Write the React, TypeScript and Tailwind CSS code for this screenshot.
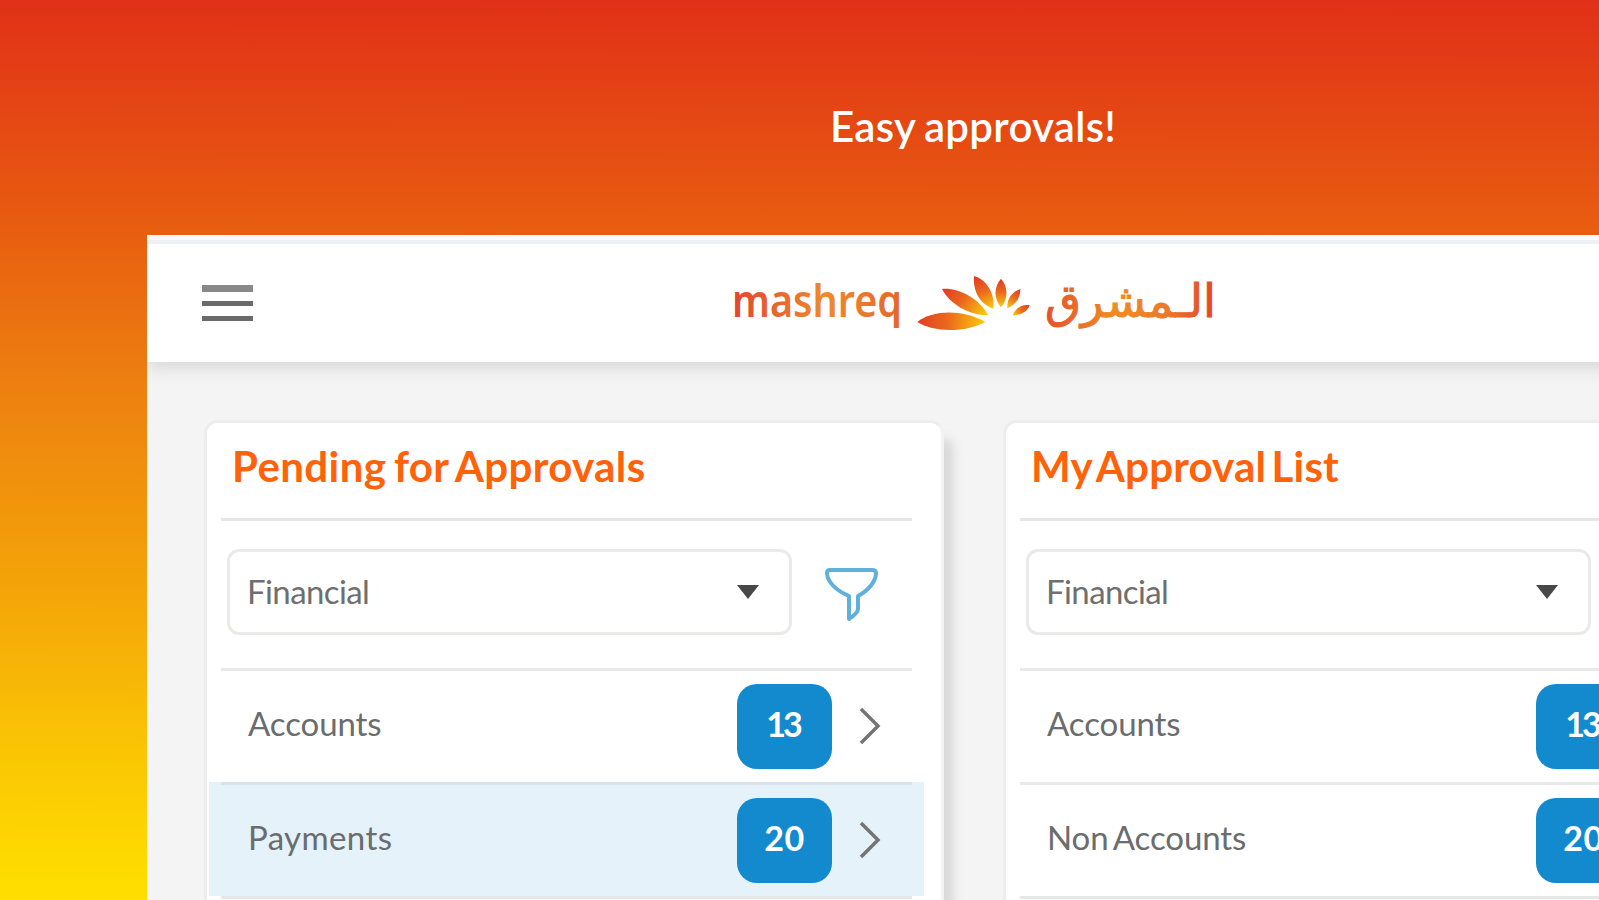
// Approvals dashboard hero: orange backdrop with a cropped app window

type Item = { label: string; count: number; active?: boolean; tracking: string; digits: string };

const pending: Item[] = [
  { label: "Accounts", count: 13, tracking: "tracking-[-0.1px]", digits: "tracking-[-3px] pr-[3px]" },
  { label: "Payments", count: 20, active: true, tracking: "tracking-[0.4px]", digits: "tracking-[0.5px]" },
];

const mine: Item[] = [
  { label: "Accounts", count: 13, tracking: "tracking-[-0.1px]", digits: "tracking-[-3px] pr-[3px]" },
  { label: "Non Accounts", count: 20, tracking: "tracking-[-0.1px] [word-spacing:-3px]", digits: "tracking-[0.5px]" },
];

// each petal runs from its outer tip to the inner, yellow end
const petals = [
  { d: "M52 186 C95 150 185 146 256 185 C200 218 100 218 52 186Z", x1: 52, y1: 180, x2: 256, y2: 190 },
  { d: "M126 87 C170 82 236 112 264 165 C212 168 150 134 126 87Z", x1: 135, y1: 85, x2: 255, y2: 170 },
  { d: "M222 48 C256 56 286 98 280 146 C242 134 218 96 222 48Z", x1: 228, y1: 52, x2: 280, y2: 146 },
  { d: "M303 56 C325 82 325 115 303 142 C281 115 281 82 303 56Z", x1: 303, y1: 60, x2: 303, y2: 142 },
  { d: "M361 87 C362 112 348 134 322 145 C320 118 334 96 361 87Z", x1: 358, y1: 88, x2: 324, y2: 145 },
  { d: "M389 136 C382 156 362 166 338 166 C346 144 366 132 389 136Z", x1: 388, y1: 136, x2: 338, y2: 166 },
];

function Logo() {
  return (
    <svg className="overflow-visible" width="486" height="60" viewBox="0 0 486 60" aria-label="mashreq">
      <defs>
        <linearGradient id="word" x1="0" x2="1" y1="0" y2="0">
          <stop offset="0" stopColor="#e2462c" />
          <stop offset="0.55" stopColor="#ee8a2c" />
          <stop offset="1" stopColor="#e5652c" />
        </linearGradient>
        <linearGradient id="wordAr" x1="0" x2="1" y1="0" y2="0">
          <stop offset="0" stopColor="#e5502c" />
          <stop offset="0.4" stopColor="#ee8c24" />
          <stop offset="0.7" stopColor="#ec7a28" />
          <stop offset="1" stopColor="#e2442c" />
        </linearGradient>
        {petals.map((p, i) => (
          <linearGradient key={i} id={"petal" + i} gradientUnits="userSpaceOnUse" x1={p.x1} y1={p.y1} x2={p.x2} y2={p.y2}>
            <stop offset="0" stopColor="#e23c22" />
            <stop offset="0.45" stopColor="#ea6a1c" />
            <stop offset="1" stopColor="#fdcc0a" />
          </linearGradient>
        ))}
      </defs>
      <text x="0" y="44" fontSize="45" fontWeight="600" fontFamily="'Noto Sans', sans-serif" textLength="170" lengthAdjust="spacingAndGlyphs" fill="url(#word)">
        mashreq
      </text>
      <g transform="translate(168 -13) scale(0.3333)">
        {petals.map((p, i) => (
          <path key={i} d={p.d} fill={"url(#petal" + i + ")"} />
        ))}
      </g>
      <text
        x="313"
        y="44"
        fontSize="46"
        fontFamily="'DejaVu Sans', sans-serif"
        textLength="171"
        lengthAdjust="spacingAndGlyphs"
        fill="url(#wordAr)"
        stroke="url(#wordAr)"
        strokeWidth="1"
      >
        الـمشرق
      </text>
    </svg>
  );
}

function Funnel() {
  return (
    <svg width="56" height="56" viewBox="0 0 56 56" fill="none" stroke="#5fb0dc" strokeWidth="4" strokeLinejoin="round">
      <path d="M6 4 H48 Q52 4 52 7 C52 15 45 24 34 30 V43 Q34 47 25 53 V30 C11 24 3 15 3 7 Q3 4 6 4Z" />
    </svg>
  );
}

function Row({ item }: { item: Item }) {
  return (
    <div className={"relative h-[114px] " + (item.active ? "ml-[2px] mr-[17px] bg-[#e5f2fa] pl-[41px]" : "pl-[43px]")}>
      <div
        className={
          "absolute top-0 h-[3px] " + (item.active ? "left-[12px] right-[12px] bg-[#dbe2e8]" : "left-[14px] right-[29px] bg-[#e9e9e9]")
        }
      />
      <div className="flex h-full items-center pt-[2px]">
        <span className={"w-[487px] shrink-0 -translate-x-0.5 -translate-y-[3px] text-[33px] leading-[40px] text-[#6a6c6e] " + item.tracking}>
          {item.label}
        </span>
        <span
          className={
            "flex h-[85px] w-[95px] shrink-0 items-center justify-center rounded-[20px] bg-[#138acd] pb-[6px] text-[34px] font-bold text-white " +
            item.digits
          }
        >
          {item.count}
        </span>
        <svg className="ml-[27px] shrink-0" width="24" height="38" viewBox="0 0 24 38" fill="none" stroke="#747474" strokeWidth="3.5">
          <path d="M2 2 L19 19 L2 36" />
        </svg>
      </div>
    </div>
  );
}

function Card({ title, items, spacing }: { title: string; items: Item[]; spacing: string }) {
  return (
    <section className="h-[600px] w-[740px] shrink-0 rounded-[14px] border-[3px] border-[#ededed] border-r-[#f3f3f3] bg-white shadow-[14px_14px_10px_-4px_#dadada]">
      <h2 className={"ml-[25px] h-[95px] pt-[15px] text-[42px] font-bold leading-[56px] text-[#ff6208] " + spacing}>{title}</h2>
      <div className="ml-[14px] mr-[29px] h-[3px] bg-[#e6e6e6]" />
      <div className="flex h-[147px] items-center pb-[5px] pl-[20px]">
        <div className="flex h-[86px] w-[565px] items-center justify-between rounded-[12px] border-[3px] border-[#eaeae8] pl-[17px] pr-[29px]">
          <span className="text-[33px] tracking-[-0.6px] text-[#6f6f6f]">Financial</span>
          <svg width="24" height="14" viewBox="0 0 24 14" fill="#484848">
            <path d="M1 0 H23 L12 14Z" />
          </svg>
        </div>
        <div className="ml-[32px] mt-[3px]">
          <Funnel />
        </div>
      </div>
      {items.map((item) => (
        <Row key={item.label} item={item} />
      ))}
      <div className="ml-[14px] mr-[29px] h-[3px] bg-[#e6e8e8]" />
    </section>
  );
}

export default function App() {
  return (
    <div className="h-[900px] w-[1599px] overflow-hidden bg-[linear-gradient(180.1deg,#e13018_0%,#e85c10_25%,#ed8010_43%,#f3a009_63%,#f9bf05_80%,#ffdd00_98%)] font-[Lato,sans-serif]">
      <p className="h-[235px] pt-[98px] pl-[830px] text-[42px] font-semibold leading-[56px] tracking-[0.3px] text-white [word-spacing:-2px]">
        Easy approvals!
      </p>
      <main className="ml-[147px] h-[665px] overflow-hidden bg-[#f4f4f4]">
        <header className="relative mr-[-30px] flex h-[127px] items-start border-t-[5px] border-[#f8fafb] bg-white shadow-[0_6px_16px_#d8d8d8]">
          <div className="absolute inset-x-0 top-0 h-[4px] bg-[#edf1f5]" />
          <div className="ml-[55px] mt-[45px] flex w-[51px] flex-col">
            <span className="h-[7px] bg-[#888]" />
            <span className="mt-[9px] h-[5px] bg-[#6a6a6a]" />
            <span className="mt-[10px] h-[5px] bg-[#6a6a6a]" />
          </div>
          <div className="ml-[479px] mt-[33px]">
            <Logo />
          </div>
        </header>
        <div className="flex gap-[59px] pl-[57px] pt-[58px]">
          <Card title="Pending for Approvals" items={pending} spacing="tracking-[0.4px] [word-spacing:-3px]" />
          <Card title="My Approval List" items={mine} spacing="tracking-[0.2px] [word-spacing:-5px]" />
        </div>
      </main>
    </div>
  );
}
